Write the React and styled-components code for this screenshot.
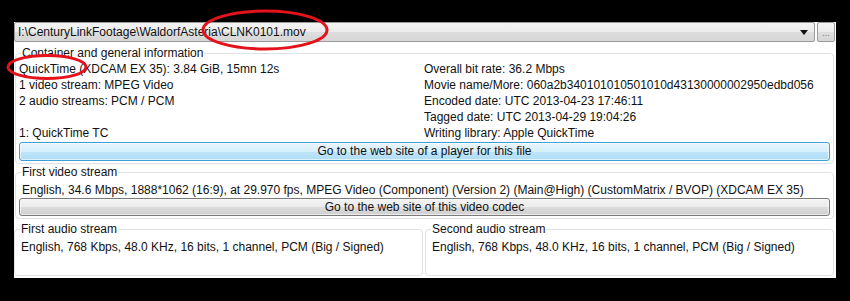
import React from "react";
import styled, { createGlobalStyle } from "styled-components";

const Global = createGlobalStyle`
  html, body { margin: 0; padding: 0; background: #000; }
  body { font-family: "Liberation Sans", Arial, sans-serif; font-size: 12px; color: #111; }
`;

const Stage = styled.div`
  position: relative;
  width: 850px;
  height: 301px;
  background: #000;
  padding: 22px 0 0 14px;
  box-sizing: border-box;
`;

const Window = styled.div`
  width: 822px;
  height: 256px;
  background: #fff;
  display: flex;
  flex-direction: column;
`;

const TopBar = styled.div`
  display: flex;
  gap: 2px;
  height: 20px;
`;

const Combo = styled.div`
  flex: 0 0 801px;
  box-sizing: border-box;
  border: 1px solid #9a9a9a;
  border-radius: 2px;
  background: linear-gradient(#f4f4f4 0%, #ececec 50%, #dedede 51%, #d6d6d6 100%);
  display: flex;
  align-items: center;
  padding: 0 4px 0 3px;
  line-height: 18px;
`;

const ComboText = styled.span`
  flex: 1;
  white-space: nowrap;
`;

const Arrow = styled.span`
  width: 0;
  height: 0;
  border-left: 4px solid transparent;
  border-right: 4px solid transparent;
  border-top: 5px solid #111;
  margin-right: 2px;
`;

const DotsButton = styled.div`
  flex: 0 0 18px;
  box-sizing: border-box;
  border: 1px solid #9a9a9a;
  border-radius: 2px;
  background: linear-gradient(#f4f4f4 0%, #ececec 50%, #dedede 51%, #d6d6d6 100%);
  color: #777;
  font-size: 9px;
  display: flex;
  align-items: flex-end;
  justify-content: center;
  padding-bottom: 4px;
  line-height: 8px;
`;

const Group = styled.fieldset`
  margin: ${(p) => p.$m || "1px 2px 0 1px"};
  padding: ${(p) => p.$pt || 0}px 3px ${(p) => p.$pb || 2}px 3px;
  border: 1px solid #dde2e6;
  border-radius: 4px;
  min-width: 0;
  flex: ${(p) => (p.$grow ? "1 1 0" : "none")};
`;

const Legend = styled.legend`
  padding: 0 1px;
  margin-left: 2px;
  line-height: 16px;
  font-size: 12px;
`;

const Columns = styled.div`
  display: grid;
  grid-template-columns: 405px 1fr;
`;

const Col = styled.div`
  display: flex;
  flex-direction: column;
  overflow: hidden;
  white-space: nowrap;
`;

const Line = styled.div`
  height: 16px;
  line-height: 16px;
  white-space: nowrap;
  padding-left: ${(p) => p.$indent || 0}px;
`;

const Button = styled.div`
  box-sizing: border-box;
  height: ${(p) => p.$h || 18}px;
  margin-top: ${(p) => p.$mt || 0}px;
  border-radius: 3px;
  border: 1px solid ${(p) => (p.$blue ? "#3c9fd8" : "#7a7a7a")};
  background: ${(p) =>
    p.$blue
      ? "linear-gradient(#e8f6fd 0%, #d6effc 50%, #bfe5fa 51%, #b0ddf5 100%)"
      : "linear-gradient(#f3f3f3 0%, #ebebeb 50%, #dddddd 51%, #cfcfcf 100%)"};
  box-shadow: inset 0 0 0 1px rgba(255,255,255,0.6);
  text-align: center;
  line-height: ${(p) => (p.$h || 18) - 2}px;
`;

const AudioRow = styled.div`
  display: flex;
`;

const Overlay = styled.svg`
  position: absolute;
  left: 0;
  top: 0;
  pointer-events: none;
`;

export default function App() {
  const left = [
    "QuickTime (XDCAM EX 35): 3.84 GiB, 15mn 12s",
    "1 video stream: MPEG Video",
    "2 audio streams: PCM / PCM",
    "",
    "1: QuickTime TC",
  ];
  const right = [
    "Overall bit rate: 36.2 Mbps",
    "Movie name/More: 060a2b340101010501010d43130000002950edbd056",
    "Encoded date: UTC 2013-04-23 17:46:11",
    "Tagged date: UTC 2013-04-29 19:04:26",
    "Writing library: Apple QuickTime",
  ];
  const audio = "English, 768 Kbps, 48.0 KHz, 16 bits, 1 channel, PCM (Big / Signed)";
  return (
    <>
      <Global />
      <Stage>
        <Window>
          <TopBar>
            <Combo>
              <ComboText>I:\CenturyLinkFootage\WaldorfAsteria\CLNK0101.mov</ComboText>
              <Arrow />
            </Combo>
            <DotsButton>...</DotsButton>
          </TopBar>
          <Group $m="3px 2px 0 1px" $pt={0}>
            <Legend>Container and general information</Legend>
            <Columns>
              <Col>
                {left.map((t, i) => (
                  <Line key={i}>{t}</Line>
                ))}
              </Col>
              <Col>
                {right.map((t, i) => (
                  <Line key={i}>{t}</Line>
                ))}
              </Col>
            </Columns>
            <Button $blue $h={19} $mt={1}>Go to the web site of a player for this file</Button>
          </Group>
          <Group $m="0 2px 0 1px" $pt={2}>
            <Legend>First video stream</Legend>
            <Line $indent={3}>
              English, 34.6 Mbps, 1888*1062 (16:9), at 29.970 fps, MPEG Video (Component) (Version 2) (Main@High) (CustomMatrix / BVOP) (XDCAM EX 35)
            </Line>
            <Button $h={18} $mt={0}>Go to the web site of this video codec</Button>
          </Group>
          <AudioRow>
            <Group $grow $m="2px 1px 0 0" $pt={2} $pb={4}>
              <Legend>First audio stream</Legend>
              <Line $indent={3}>{audio}</Line>
              <Line />
            </Group>
            <Group $grow $m="2px 2px 0 1px" $pt={2} $pb={4}>
              <Legend>Second audio stream</Legend>
              <Line $indent={3}>{audio}</Line>
              <Line />
            </Group>
          </AudioRow>
        </Window>
        <Overlay width="850" height="301" viewBox="0 0 850 301">
          <ellipse cx="265" cy="30" rx="62" ry="19" fill="none" stroke="#e3121b" strokeWidth="3" />
          <ellipse cx="47" cy="67" rx="39" ry="11.5" fill="none" stroke="#e3121b" strokeWidth="3" />
        </Overlay>
      </Stage>
    </>
  );
}
